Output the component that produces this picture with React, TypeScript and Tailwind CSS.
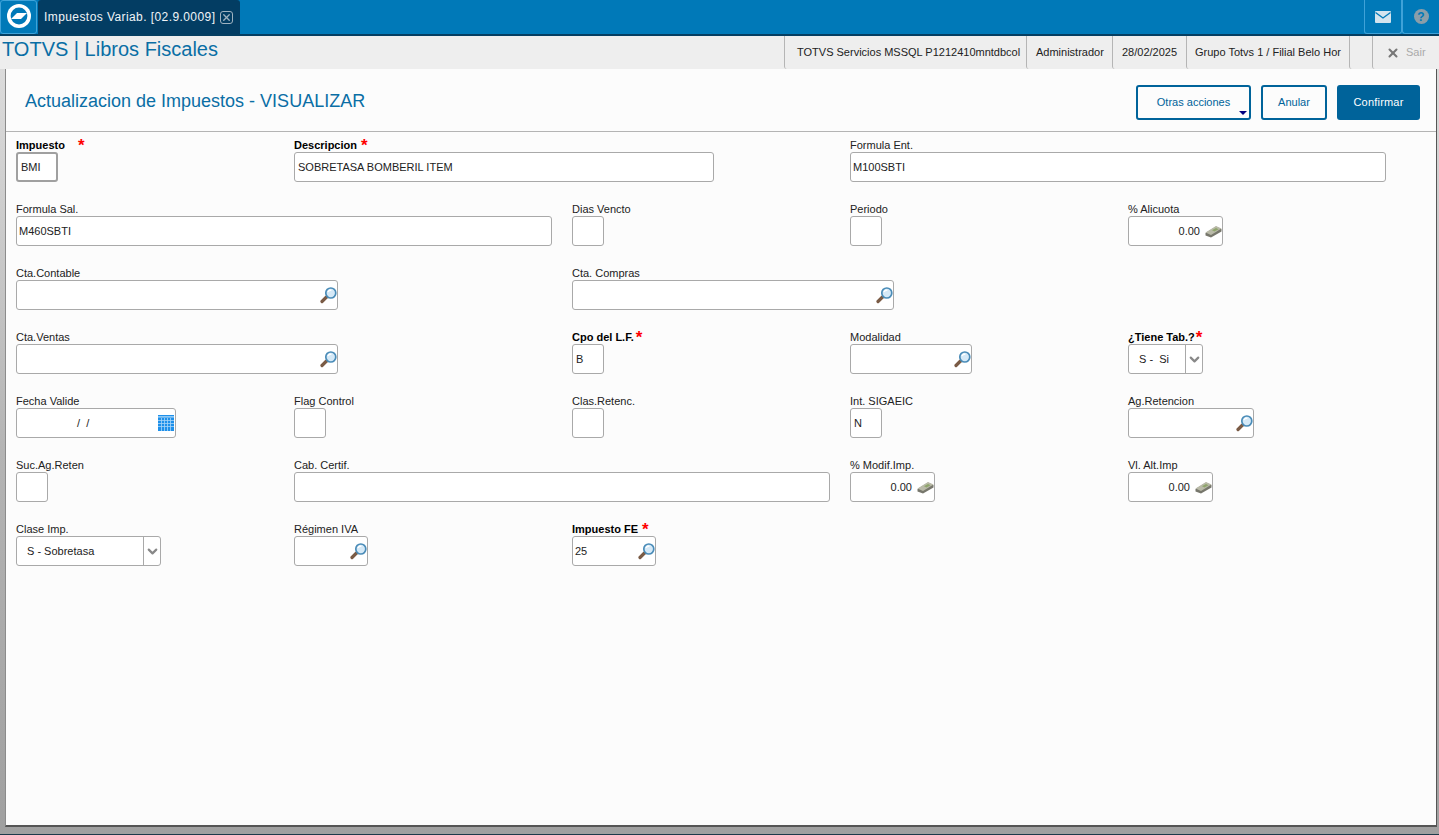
import type { ReactNode } from 'react'
import { ChevronDown, X } from 'lucide-react'

function Logo() {
  return (
    <svg width="24" height="24" viewBox="0 0 24 24" className="mb-[2px]">
      <circle cx="12" cy="12" r="12" fill="#fff" />
      <circle cx="12" cy="12" r="8.4" fill="#0079b8" />
      <path d="M4 15 L10 9 L20 9 L14 15 Z" fill="#fff" />
    </svg>
  )
}

function Lens() {
  return (
    <svg width="17" height="17" viewBox="0 0 17 17" className="-mr-[2px] shrink-0">
      <path d="M6.5 10 L2 14.5" stroke="#7a5b45" strokeWidth="3.2" strokeLinecap="round" />
      <circle cx="10.8" cy="6" r="5" fill="#d5e9f7" stroke="#4a8cb8" strokeWidth="1.7" />
      <path d="M8 5 C8.6 3.7 10 3 11.4 3.4" stroke="#fff" strokeWidth="1.3" fill="none" />
    </svg>
  )
}

function Money() {
  return (
    <svg width="17" height="13" viewBox="0 0 17 13" className="-mr-[2px] shrink-0">
      <path d="M0.5 8 L11 1.5 L16.5 4 L16.5 6.5 L6 12.5 L0.5 10.5 Z" fill="#77776c" />
      <path d="M0.5 7.5 L11 1 L16.5 3.5 L6 10 Z" fill="#b9baa8" />
      <path d="M7 5.2 L11 3 L13.5 4.2 L9.5 6.5 Z" fill="#8fa56b" />
    </svg>
  )
}

function Calendar() {
  return (
    <svg width="16" height="16" viewBox="0 0 16 16" className="-mr-px shrink-0">
      <rect width="16" height="16" fill="#1e90ea" />
      <path d="M0 5.5H16M0 8.5H16M0 11.5H16M3.5 3V16M6.5 3V16M9.5 3V16M12.5 3V16" stroke="#a8d6f7" strokeWidth="0.8" />
      <rect y="1.4" width="16" height="1" fill="#d7edfc" />
    </svg>
  )
}

function MailIcon() {
  return (
    <svg width="16" height="12" viewBox="0 0 16 12">
      <rect width="16" height="12" rx="1" fill="#d3e4ee" />
      <path d="M0.5 1.5 L8 7 L15.5 1.5" stroke="#0079b8" strokeWidth="1.4" fill="none" />
    </svg>
  )
}

function Field({
  label,
  width,
  span = 1,
  required,
  strong,
  thick,
  gap = 4,
  children,
}: {
  label: string
  width: number
  span?: number
  required?: boolean
  strong?: boolean
  thick?: boolean
  gap?: number
  children?: ReactNode
}) {
  return (
    <div style={{ gridColumn: `span ${span}` }} className="flex flex-col">
      <div className="flex h-[13px] items-center text-[11px] leading-[13px] whitespace-nowrap text-[#222]">
        <span className={strong ? 'font-bold text-black' : ''}>{label}</span>
        {required && (
          <span style={{ marginLeft: gap }} className="text-[17px] leading-[13px] font-bold text-[#f00]">
            *
          </span>
        )}
      </div>
      <div
        style={{ width }}
        className={`flex h-[30px] items-center rounded-[3px] bg-white text-[11px] text-[#222] ${
          thick ? 'border-2 border-[#a0a0a0] px-[3px]' : 'border border-[#a9a9a9] px-[2px]'
        }`}
      >
        {children}
      </div>
    </div>
  )
}

function LensField(props: { label: string; width: number; span?: number; required?: boolean; strong?: boolean; gap?: number; value?: string }) {
  return (
    <Field {...props}>
      <span className="flex-1">{props.value}</span>
      <Lens />
    </Field>
  )
}

function MoneyField(props: { label: string; width: number }) {
  return (
    <Field {...props}>
      <span className="flex-1 pr-[5px] text-right">0.00</span>
      <Money />
    </Field>
  )
}

function Select({ value }: { value: string }) {
  return (
    <>
      <span className="flex-1 pl-2 whitespace-pre">{value}</span>
      <span className="-mr-[2px] flex h-full w-[17px] items-center justify-center border-l border-[#a9a9a9]">
        <ChevronDown size={15} strokeWidth={3.5} color="#888" />
      </span>
    </>
  )
}

export default function App() {
  return (
    <div className="flex h-[835px] w-[1439px] flex-col overflow-hidden bg-[#eeeeee] font-['Liberation_Sans',Arial,sans-serif]">
      <header className="flex h-[36px] shrink-0 border-b-2 border-[#053e61] bg-[#0079b8]">
        <div className="flex h-[34px] w-[37px] items-center justify-center rounded-[3px] border border-[#3fa2d8]">
          <Logo />
        </div>
        <div className="ml-px flex h-[34px] w-[202px] items-center rounded-t-[3px] bg-[#033d63] pl-[6px] text-[12px] tracking-[0.42px] text-[#f0f4f7]">
          <span>Impuestos Variab. [02.9.0009]</span>
          <span className="ml-[5px] flex h-[13px] w-[13px] items-center justify-center rounded-[3px] border border-[#9fb2c0]">
            <X size={11} strokeWidth={3} color="#9fb2c0" />
          </span>
        </div>
        <div className="flex-1" />
        <div className="flex h-[34px] w-[38px] items-center justify-center rounded-b-[3px] border border-t-0 border-[#3fa2d8]">
          <MailIcon />
        </div>
        <div className="flex h-[34px] w-[37px] items-center justify-center rounded-bl-[3px] border-b border-l border-[#3fa2d8]">
          <span className="flex h-[15px] w-[15px] items-center justify-center rounded-full bg-[#8a9ea9] text-[12px] font-bold text-[#0079b8]">?</span>
        </div>
      </header>

      <div className="flex h-[33px] shrink-0 items-stretch bg-[#eeeeee] text-[11px] text-[#222]">
        <div className="flex-1 pl-[2px] text-[20px] leading-[26px] text-[#0a6ea5]">TOTVS | Libros Fiscales</div>
        <div className="flex w-[242px] items-center rounded-bl-[3px] border-l border-[#b5b5b5] pl-[12px] whitespace-nowrap">TOTVS Servicios MSSQL P1212410mntdbcol</div>
        <div className="flex w-[86px] items-center rounded-bl-[3px] border-l border-[#b5b5b5] pl-[9px]">Administrador</div>
        <div className="flex w-[74px] items-center rounded-bl-[3px] border-l border-[#b5b5b5] pl-[9px]">28/02/2025</div>
        <div className="flex w-[163px] items-center rounded-bl-[3px] border-l border-[#b5b5b5] pl-[8px] whitespace-nowrap">Grupo Totvs 1 / Filial Belo Hor</div>
        <div className="w-[23px] rounded-bl-[3px] border-l border-[#b5b5b5]" />
        <div className="flex w-[67px] items-center gap-[6px] rounded-bl-[3px] border-l border-[#b5b5b5] pl-[13px] text-[#aaa]">
          <X size={14} strokeWidth={3.5} color="#777" />
          Sair
        </div>
      </div>

      <div className="flex-1 border-b border-[#1c3a4a] bg-gradient-to-b from-[#dcdcdc] via-[#b4b4b4] to-[#a0a0a0]">
        <main className="ml-[5px] flex h-[758px] w-[1432px] flex-col border-x border-b-2 border-[#555] border-l-[#8c8c8c] bg-[#fcfcfc]">
          <div className="flex h-[63px] shrink-0 items-center justify-between border-b border-[#b4b4b4] pr-[16px] pl-[19px] pt-[5px]">
            <h1 className="pb-[3px] text-[18px] text-[#0a6ea5]">Actualizacion de Impuestos - VISUALIZAR</h1>
            <div className="flex items-center gap-[10px]">
              <button className="relative h-[35px] w-[115px] rounded-[3px] border-2 border-[#00639a] text-[11px] text-[#00639a]">
                Otras acciones
                <span className="absolute right-[2px] bottom-[3px] border-x-[4px] border-t-[4px] border-x-transparent border-t-[#000080]" />
              </button>
              <button className="h-[35px] w-[66px] rounded-[3px] border-2 border-[#00639a] text-[11px] text-[#00639a]">Anular</button>
              <button className="h-[35px] w-[83px] rounded-[3px] bg-[#00639a] text-[11px] tracking-[0.2px] text-white">Confirmar</button>
            </div>
          </div>

          <div className="grid grid-cols-[repeat(5,278px)] auto-rows-[64px] pt-[7px] pl-[10px]">
            <Field label="Impuesto" width={42} required strong thick gap={13}>BMI</Field>
            <Field label="Descripcion" width={420} span={2} required strong gap={4}>
              <span className="pl-px">SOBRETASA BOMBERIL ITEM</span>
            </Field>
            <Field label="Formula Ent." width={536} span={2}>M100SBTI</Field>

            <Field label="Formula Sal." width={536} span={2}>M460SBTI</Field>
            <Field label="Dias Vencto" width={32} />
            <Field label="Periodo" width={32} />
            <MoneyField label="% Alicuota" width={95} />

            <LensField label="Cta.Contable" width={322} span={2} />
            <LensField label="Cta. Compras" width={322} span={3} />

            <LensField label="Cta.Ventas" width={322} span={2} />
            <Field label="Cpo del L.F." width={32} required strong gap={2}>
              <span className="pl-px">B</span>
            </Field>
            <LensField label="Modalidad" width={122} />
            <Field label="¿Tiene Tab.?" width={75} required strong gap={1}>
              <Select value="S -  Si" />
            </Field>

            <Field label="Fecha Valide" width={160}>
              <span className="flex-1 pl-[58px]">/&nbsp; /</span>
              <Calendar />
            </Field>
            <Field label="Flag Control" width={32} />
            <Field label="Clas.Retenc." width={32} />
            <Field label="Int. SIGAEIC" width={32}>
              <span className="pl-px">N</span>
            </Field>
            <LensField label="Ag.Retencion" width={126} />

            <Field label="Suc.Ag.Reten" width={32} />
            <Field label="Cab. Certif." width={536} span={2} />
            <MoneyField label="% Modif.Imp." width={85} />
            <MoneyField label="Vl. Alt.Imp" width={85} />

            <Field label="Clase Imp." width={145}>
              <Select value="S - Sobretasa" />
            </Field>
            <LensField label="Régimen IVA" width={74} />
            <LensField label="Impuesto FE" width={84} required strong gap={4} value="25" />
          </div>
        </main>
      </div>
    </div>
  )
}
